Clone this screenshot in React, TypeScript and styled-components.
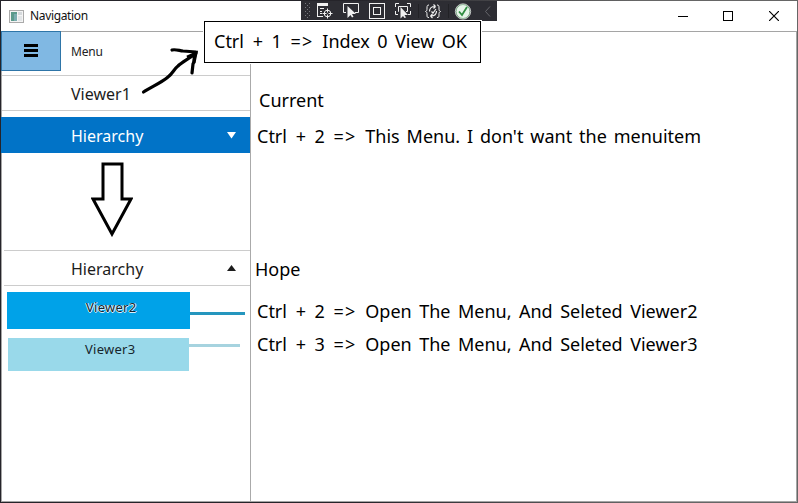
import styled, { createGlobalStyle, css } from "styled-components";

const GlobalStyle = createGlobalStyle`
  * {
    box-sizing: border-box;
  }

  body {
    margin: 0;
    overflow: hidden;
    font-family: "Noto Sans", "Open Sans", sans-serif;
    color: #000;
  }
`;

const center = css`
  display: flex;
  align-items: center;
  justify-content: center;
`;

const Desktop = styled.div`
  width: 798px;
  height: 503px;
  padding: 1px;
  background: linear-gradient(90deg, #25242a 0 45%, #666 80%);
`;

const Window = styled.div`
  position: relative;
  height: 501px;
  display: flex;
  flex-direction: column;
  background: #fff;
`;

const TitleBar = styled.header`
  height: 30px;
  flex: none;
  display: flex;
  align-items: center;
  padding-left: 8px;
`;

const Title = styled.span`
  flex: 1;
  margin-left: 6px;
  font-size: 12px;
  letter-spacing: -0.35px;
  line-height: 28px;
  color: #111;
`;

const WindowButton = styled.button`
  ${center}
  width: 46px;
  height: 28px;
  padding: 0;
  border: 0;
  background: none;
`;

const Body = styled.div`
  flex: 1;
  display: grid;
  grid-template-columns: 249px 1fr;
  border: 1px solid #a5a5a5;
`;

const Sidebar = styled.nav`
  border-right: 1px solid #aaa;
`;

const MenuHeader = styled.div`
  display: flex;
  height: 44px;
  margin: -1px 0 0 -1px;
`;

const MenuButton = styled.button`
  ${center}
  width: 60px;
  height: 40px;
  padding: 0 1px 1px 0;
  border: 1px solid #2e75a8;
  background: #80b8e3;
`;

const MenuLabel = styled.span`
  margin-left: 10px;
  font-size: 12px;
  letter-spacing: -0.2px;
  line-height: 41px;
  color: #222;
`;

const NavItem = styled.div<{ $selected?: boolean; $inset?: number }>`
  display: flex;
  align-items: center;
  justify-content: space-between;
  height: 36px;
  margin-left: ${({ $inset = 0 }) => $inset}px;
  padding: 0 14px 0 ${({ $inset = 0 }) => 69 - $inset}px;
  border: solid #ccc;
  border-width: 1px 0;
  font-size: 16px;
  line-height: 34px;
  color: #1c1c1c;

  ${({ $selected }) =>
    $selected &&
    css`
      margin: 6px 0 0 -1px;
      padding-left: 70px;
      border: 0;
      background: #0173c7;
      color: #fff;
    `}
`;

const NavLabel = styled.span`
  padding-top: 2px;
  line-height: 32px;
`;

const Gap = styled.div`
  height: 97px;
  padding: 8px 0 0 89px;
`;

const SubRow = styled.div<{ $top: number; $left: number }>`
  display: flex;
  margin: ${({ $top }) => $top}px 0 0 ${({ $left }) => $left}px;
`;

const SubItem = styled.div<{ $color: string; $width: number; $height: number; $outlined?: boolean }>`
  width: ${({ $width }) => $width}px;
  height: ${({ $height }) => $height}px;
  padding-left: ${({ $width }) => $width - 104}px;
  background: ${({ $color }) => $color};
  font-size: 13px;
  letter-spacing: 0.25px;
  line-height: ${({ $outlined }) => ($outlined ? 31 : 23)}px;
  color: #17252c;

  ${({ $outlined }) =>
    $outlined &&
    css`
      text-shadow: -1px 0 #d8efff, 1px 0 #d8efff, 0 1px #d8efff;
    `}
`;

const Connector = styled.div<{ $color: string; $width: number; $top: number }>`
  width: ${({ $width }) => $width}px;
  height: 3px;
  margin-top: ${({ $top }) => $top}px;
  background: ${({ $color }) => $color};
`;

const Notes = styled.main`
  padding: 55px 0 0 6px;
`;

const Note = styled.p<{ $top?: number; $indent?: number; $words?: number }>`
  margin: ${({ $top = 0 }) => $top}px 0 0 ${({ $indent = 0 }) => $indent}px;
  font-size: 18px;
  line-height: 26px;
  word-spacing: ${({ $words = 0 }) => $words}px;
  white-space: nowrap;
`;

const Shortcut = styled.span`
  word-spacing: 4px;
`;

const Implies = styled.span`
  letter-spacing: 1.2px;
`;

const DebugBar = styled.div`
  position: absolute;
  top: 0;
  left: 300px;
  width: 196px;
  height: 20px;
  background: #2d2d33;

  svg {
    display: block;
  }
`;

const Callout = styled.div`
  position: absolute;
  top: 20px;
  left: 203px;
  width: 277px;
  height: 42px;
  padding: 6px 0 0 9px;
  border: 1px solid #000;
  outline: 1px solid #fff;
  background: #fff;
`;

const HandArrow = styled.svg`
  position: absolute;
  top: 44px;
  left: 138px;
`;

function AppIcon() {
  return (
    <svg width="15" height="13" viewBox="0 0 15 13">
      <rect x=".5" y=".5" width="14" height="12" fill="#f4f4f4" stroke="#aaa" />
      <rect x="2" y="2" width="6" height="9" fill="#5b9a8b" />
      <rect x="5" y="4" width="3" height="7" fill="#7badb0" />
      <rect x="9" y="2" width="4" height="3" fill="#d5d9dc" />
      <rect x="9" y="6" width="4" height="5" fill="#e2e5e7" />
    </svg>
  );
}

function DebugIcons() {
  return (
    <svg width="196" height="20" viewBox="0 0 196 20" fill="none" stroke="#f1f1f1">
      <g fill="#77777c" stroke="none">
        {[2, 6, 10, 14].map((y) => (
          <g key={y}>
            <rect x="4" y={y} width="1" height="1" />
            <rect x="8" y={y} width="1" height="1" />
            <rect x="6" y={y + 2} width="1" height="1" />
          </g>
        ))}
      </g>
      {/* live visual tree */}
      <path d="M16.500 3v12M16 15.500h6M19 7.500h4M19 10.500h2M19 12.500h2" />
      <path d="M16 2h11v3H16z" fill="#f1f1f1" stroke="none" />
      <circle cx="26.500" cy="12.500" r="3.300" />
      <path d="M26.500 7.500v4M26.500 13.500v4M21.500 12.500h4M27.500 12.500h4" />
      {/* select element */}
      <path d="M45 11.500h-2.500v-9h15v9H54" />
      <path d="M46.500 5v12l3-3 1.500 2.500 1.500-.7-1.500-2.800h4z" fill="#f1f1f1" stroke="none" />
      {/* layout adorners */}
      <rect x="68.500" y="2.500" width="15" height="15" />
      <rect x="72.500" y="6.500" width="7" height="7" />
      {/* track focused element */}
      <path d="M94.500 6V2.500H98M106 2.500h3.500V6M109.500 10v3.500H107M94.500 10v3.500H97M98 10.500h-.5v-5h9v5H105" />
      <path d="M99.500 6v11.500l2.500-2.500 1.500 2 1.500-.5-1.500-2.500h3.500z" fill="#f1f1f1" stroke="none" />
      <path d="M117.500 3v14M147.500 3v14" stroke="#222226" />
      {/* hot reload */}
      <path d="M128 4c-2 0-2 1-2 3s0 3-1.500 3.500C126 11 126 12 126 14s0 2.500 2 2.500M136 4c2 0 2 1 2 3s0 3 1.500 3.500C138 11 138 12 138 14s0 2.500-2 2.500" />
      <path d="M128.500 10.500c0-3.500 2-5 5.500-5M134.500 5.500l-2-2M134.500 5.500l-2 2M135.500 10c0 3.500-2 5-5.500 5M129.500 15l2-2M129.500 15l2 2M130.500 10.500l1.500 1.500 3-4" strokeWidth="1.200" />
      <circle cx="162" cy="10.500" r="7" fill="#e6f5e9" stroke="#79ad83" />
      <circle cx="162" cy="10.500" r="7.700" strokeWidth=".7" />
      <path d="M158 10.500l3 3.500 5-8" stroke="#2f8d41" strokeWidth="1.800" />
      <path d="M189 5.500l-4.500 5 4.500 5" stroke="#66666b" />
    </svg>
  );
}

function Triangle({ up = false }: { up?: boolean }) {
  return (
    <svg width="9" height="7" viewBox="0 0 9 7" fill="currentColor">
      <path d={up ? "M0 6L4.500 0 9 6z" : "M0 0h9L4.500 6.500z"} />
    </svg>
  );
}

function Keys({ digit }: { digit: number }) {
  return (
    <Shortcut>
      Ctrl + {digit} <Implies>=&gt;</Implies>{" "}
    </Shortcut>
  );
}

export default function App() {
  return (
    <Desktop>
      <GlobalStyle />
      <Window>
        <TitleBar>
          <AppIcon />
          <Title>Navigation</Title>
          <WindowButton aria-label="Minimize">
            <svg width="12" height="10">
              <path d="M2 5.500h10" stroke="#000" />
            </svg>
          </WindowButton>
          <WindowButton aria-label="Maximize">
            <svg width="10" height="10">
              <rect x=".5" y=".5" width="9" height="9" fill="none" stroke="#000" />
            </svg>
          </WindowButton>
          <WindowButton aria-label="Close">
            <svg width="10" height="10">
              <path d="M0 0l10 10M10 0L0 10" stroke="#000" strokeWidth="1.200" />
            </svg>
          </WindowButton>
        </TitleBar>

        <Body>
          <Sidebar>
            <MenuHeader>
              <MenuButton aria-label="Toggle menu">
                <svg width="14" height="13">
                  <path d="M0 1.500h14M0 6.500h14M0 11.500h14" stroke="#000" strokeWidth="3" />
                </svg>
              </MenuButton>
              <MenuLabel>Menu</MenuLabel>
            </MenuHeader>
            <NavItem>
              <NavLabel>Viewer1</NavLabel>
            </NavItem>
            <NavItem $selected>
              <NavLabel>Hierarchy</NavLabel>
              <Triangle />
            </NavItem>
            <Gap>
              <svg width="42" height="76" viewBox="0 0 42 76" fill="none">
                <path d="M12 3h19v35h9L21 73 2 38h10z" stroke="#000" strokeWidth="3" />
              </svg>
            </Gap>
            <NavItem $inset={2}>
              <NavLabel>Hierarchy</NavLabel>
              <Triangle up />
            </NavItem>
            <SubRow $top={6} $left={5}>
              <SubItem $color="#00a2e8" $width={183} $height={37} $outlined>
                Viewer2
              </SubItem>
              <Connector $color="#2596be" $width={55} $top={20} />
            </SubRow>
            <SubRow $top={9} $left={6}>
              <SubItem $color="#99d9ea" $width={181} $height={33}>
                Viewer3
              </SubItem>
              <Connector $color="#a6d3df" $width={51} $top={6} />
            </SubRow>
          </Sidebar>

          <Notes>
            <Note $indent={2}>Current</Note>
            <Note $top={10} $words={2.2}>
              <Keys digit={2} />
              This Menu. I don't want the menuitem
            </Note>
            <Note $top={107} $indent={-2}>
              Hope
            </Note>
            <Note $top={16} $words={2.8}>
              <Keys digit={2} />
              Open The Menu, And Seleted Viewer2
            </Note>
            <Note $top={7} $words={2.8}>
              <Keys digit={3} />
              Open The Menu, And Seleted Viewer3
            </Note>
          </Notes>
        </Body>

        <DebugBar>
          <DebugIcons />
        </DebugBar>
        <HandArrow width="64" height="52" viewBox="0 0 64 52" fill="none">
          <path
            d="M4.500 47C12 42 22 38 29 32C34 28 35 24 39 21C43 17 48 15 56 9M33 5C36 4 40 5.500 44 6L57 7M57 8C54 12 56 16 54 19L53 28"
            stroke="#000"
            strokeWidth="3.200"
            strokeLinecap="round"
            strokeLinejoin="round"
          />
          <path d="M48 12l9-4-2 10" stroke="#000" strokeWidth="3" />
        </HandArrow>
        <Callout>
          <Note $words={2.7}>
            <Keys digit={1} />
            Index 0 View OK
          </Note>
        </Callout>
      </Window>
    </Desktop>
  );
}
